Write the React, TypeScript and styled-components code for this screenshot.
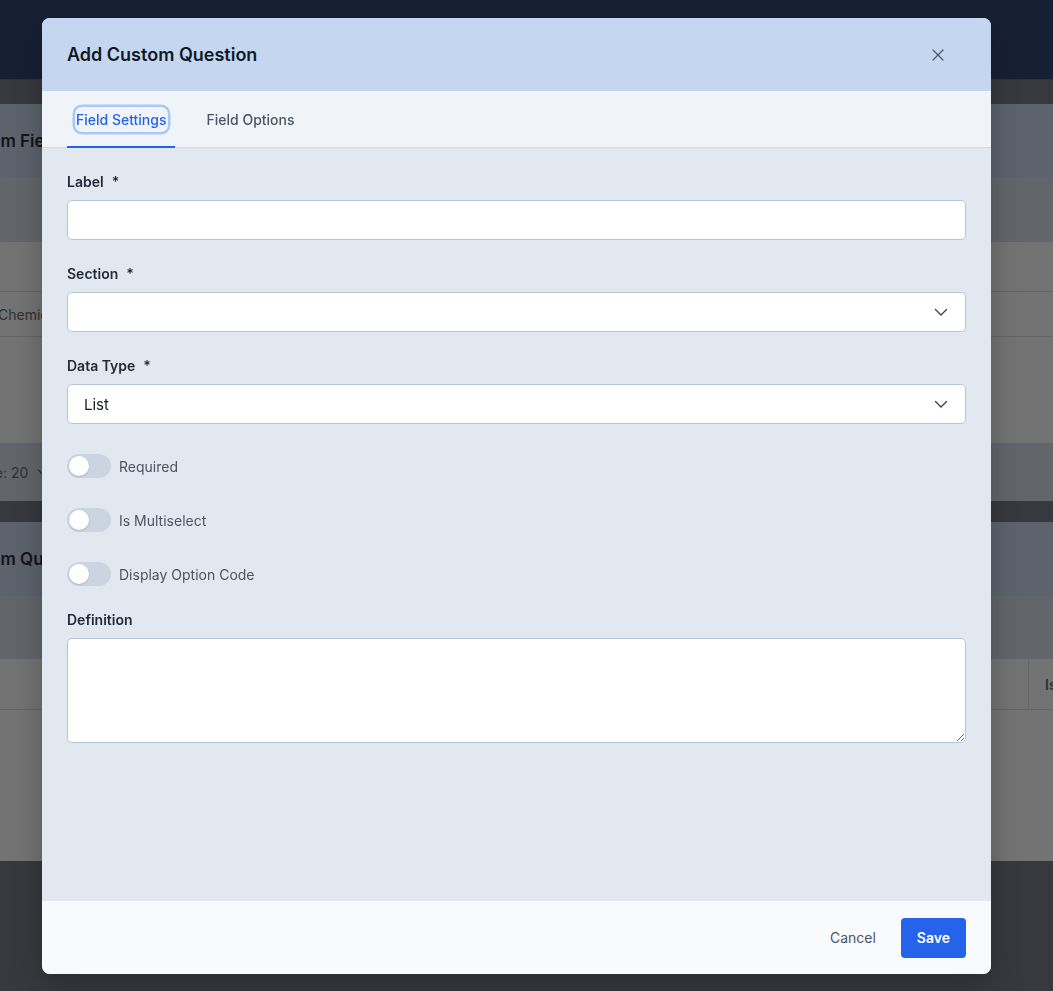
import React from "react";
import styled, { createGlobalStyle } from "styled-components";

const Global = createGlobalStyle`
  html, body { margin: 0; padding: 0; }
  body {
    font-family: Inter, "Noto Sans", "Liberation Sans", sans-serif;
    background: #38393e;
    width: 1053px;
    height: 991px;
    overflow: hidden;
  }
  * { box-sizing: border-box; }
`;

/* ---------- background page (seen through the overlay) ---------- */
const Page = styled.div`
  width: 1053px;
  height: 991px;
  display: flex;
  flex-direction: column;
  background: #38393e;
  overflow: hidden;
`;
const TopBar = styled.div`
  height: 80px;
  background: #172033;
  border-bottom: 1px solid #2b3342;
  flex-shrink: 0;
`;
const Main = styled.div`
  display: flex;
  flex-direction: column;
  gap: 21px;
  padding-top: 24px;
  margin-left: -150px;
  width: 1350px;
  flex-shrink: 0;
`;
const Card = styled.div`
  display: flex;
  flex-direction: column;
  background: #737373;
`;
const CardHeader = styled.div<{ $h: number }>`
  height: ${(p) => p.$h}px;
  background: #5c636d;
  display: flex;
  align-items: center;
  padding-left: 102px;
  font-size: 17px;
  font-weight: 600;
  color: #111418;
`;
const CardToolbar = styled.div<{ $h: number }>`
  height: ${(p) => p.$h}px;
  background: #62666a;
`;
const TableRow = styled.div<{ $h: number; $line?: boolean }>`
  height: ${(p) => p.$h}px;
  display: flex;
  align-items: center;
  border-bottom: ${(p) => (p.$line ? "1px solid #666666" : "none")};
  font-size: 14px;
  color: #2f2f2f;
  padding-left: 148px;
`;
const HeaderCell = styled.div`
  margin-left: auto;
  height: 100%;
  width: 172px;
  border-left: 1px solid #666666;
  display: flex;
  align-items: center;
  padding-left: 16px;
  font-weight: 600;
  color: #2f2f2f;
`;
const CardFooter = styled.div<{ $h: number }>`
  height: ${(p) => p.$h}px;
  background: #62666a;
  display: flex;
  align-items: center;
  padding-left: 54px;
  font-size: 14px;
  color: #2f2f2f;
  gap: 8px;
`;

/* ---------- modal ---------- */
const Overlay = styled.div`
  position: fixed;
  inset: 0;
  display: flex;
  justify-content: flex-start;
  padding: 18px 0 0 42px;
`;
const Modal = styled.div`
  width: 949px;
  height: 956px;
  background: #e2e8f0;
  border-radius: 8px;
  overflow: hidden;
  display: flex;
  flex-direction: column;
  box-shadow: 0 10px 30px rgba(0, 0, 0, 0.25);
`;
const ModalHeader = styled.div`
  height: 73px;
  flex-shrink: 0;
  background: #c5d7f0;
  display: flex;
  align-items: center;
  justify-content: space-between;
  padding: 0 41px 0 25px;
`;
const Title = styled.h2`
  margin: 0;
  font-size: 18px;
  font-weight: 600;
  color: #111827;
`;
const CloseButton = styled.button`
  width: 24px;
  height: 24px;
  border: none;
  background: transparent;
  padding: 0;
  display: flex;
  align-items: center;
  justify-content: center;
  cursor: pointer;
`;
const TabBar = styled.div`
  height: 57px;
  flex-shrink: 0;
  background: #f0f4f9;
  border-bottom: 1px solid #cfd8e3;
  display: flex;
  align-items: stretch;
  gap: 23px;
  padding: 0 25px;
`;
const Tab = styled.div<{ $active?: boolean }>`
  display: flex;
  align-items: center;
  padding: 2px 7px 0 8px;
  font-size: 14px;
  font-weight: 500;
  color: ${(p) => (p.$active ? "#2563eb" : "#4b5563")};
  border-bottom: 2px solid ${(p) => (p.$active ? "#2563eb" : "transparent")};
  margin-bottom: -1px;
`;
const TabText = styled.span<{ $focus?: boolean }>`
  padding: 4px 1px;
  border-radius: 7px;
  box-shadow: ${(p) => (p.$focus ? "0 0 0 2.5px #a9c9f5" : "none")};
`;
const Body = styled.div`
  flex: 1;
  display: flex;
  flex-direction: column;
  gap: 23px;
  padding: 23px 25px 0;
`;
const Field = styled.div`
  display: flex;
  flex-direction: column;
  gap: 9px;
`;
const Label = styled.label`
  font-size: 14px;
  line-height: 20px;
  font-weight: 600;
  color: #1f2937;
  display: flex;
  gap: 8px;
  padding-top: 1px;
  margin-bottom: -1px;
`;
const Input = styled.div`
  height: 40px;
  background: #fff;
  border: 1px solid #b7c5d8;
  border-radius: 5px;
  display: flex;
  align-items: center;
  padding: 0 16px;
  font-size: 15px;
  color: #111827;
`;
const SelectBox = styled(Input)`
  justify-content: space-between;
`;
const TextArea = styled.textarea`
  height: 105px;
  background: #fff;
  border: 1px solid #b7c5d8;
  border-radius: 5px;
  resize: vertical;
  font-family: inherit;
  outline: none;
`;
const ToggleGroup = styled.div`
  display: flex;
  flex-direction: column;
  gap: 30px;
  padding-top: 7px;
`;
const ToggleRow = styled.div`
  display: flex;
  align-items: center;
  gap: 8px;
  height: 24px;
  font-size: 14px;
  color: #4b5563;
`;
const Track = styled.span`
  width: 44px;
  height: 24px;
  border-radius: 12px;
  background: #cbd5e1;
  display: flex;
  align-items: center;
  padding: 2px;
  flex-shrink: 0;
`;
const Knob = styled.span`
  width: 20px;
  height: 20px;
  border-radius: 50%;
  background: #fff;
  box-shadow: 0 1px 2px rgba(0, 0, 0, 0.15);
`;
const Footer = styled.div`
  height: 73px;
  flex-shrink: 0;
  background: #f8fafc;
  display: flex;
  align-items: center;
  justify-content: flex-end;
  gap: 9px;
  padding: 0 25px;
`;
const Button = styled.button<{ $primary?: boolean }>`
  height: 40px;
  padding: 0 16px;
  border: none;
  border-radius: 4px;
  font-family: inherit;
  font-size: 14px;
  font-weight: ${(p) => (p.$primary ? 600 : 400)};
  background: ${(p) => (p.$primary ? "#2563eb" : "transparent")};
  color: ${(p) => (p.$primary ? "#fff" : "#4b5563")};
  cursor: pointer;
`;

const Chevron = ({ size = 16, color = "#374151" }: { size?: number; color?: string }) => (
  <svg width={size} height={size} viewBox="0 0 16 16" fill="none">
    <path d="M2.5 5.5 8 11l5.5-5.5" stroke={color} strokeWidth="1.3" strokeLinecap="round" strokeLinejoin="round" />
  </svg>
);

const CloseIcon = () => (
  <svg width="12" height="12" viewBox="0 0 12 12" fill="none">
    <path d="M1 1l10 10M11 1 1 11" stroke="#4b5563" strokeWidth="1.2" strokeLinecap="round" />
  </svg>
);

const Toggle = ({ label }: { label: string }) => (
  <ToggleRow>
    <Track>
      <Knob />
    </Track>
    <span>{label}</span>
  </ToggleRow>
);

export default function App() {
  return (
    <>
      <Global />
      <Page>
        <TopBar />
        <Main>
          <Card>
            <CardHeader $h={73}>Custom Fields</CardHeader>
            <CardToolbar $h={65} />
            <TableRow $h={50} $line />
            <TableRow $h={45} $line>Chemical</TableRow>
            <TableRow $h={106} />
            <CardFooter $h={58}>
              <span>Rows per page: 20</span>
              <Chevron size={14} color="#2f2f2f" />
            </CardFooter>
          </Card>
          <Card>
            <CardHeader $h={74}>Custom Questions</CardHeader>
            <CardToolbar $h={63} />
            <TableRow $h={51} $line>
              <HeaderCell>Is Active</HeaderCell>
            </TableRow>
            <TableRow $h={151} />
          </Card>
        </Main>
      </Page>
      <Overlay>
        <Modal>
          <ModalHeader>
            <Title>Add Custom Question</Title>
            <CloseButton aria-label="Close">
              <CloseIcon />
            </CloseButton>
          </ModalHeader>
          <TabBar>
            <Tab $active>
              <TabText $focus>Field Settings</TabText>
            </Tab>
            <Tab>
              <TabText>Field Options</TabText>
            </Tab>
          </TabBar>
          <Body>
            <Field>
              <Label>
                Label <span>*</span>
              </Label>
              <Input />
            </Field>
            <Field>
              <Label>
                Section <span>*</span>
              </Label>
              <SelectBox>
                <span />
                <Chevron />
              </SelectBox>
            </Field>
            <Field>
              <Label>
                Data Type <span>*</span>
              </Label>
              <SelectBox>
                <span>List</span>
                <Chevron />
              </SelectBox>
            </Field>
            <ToggleGroup>
              <Toggle label="Required" />
              <Toggle label="Is Multiselect" />
              <Toggle label="Display Option Code" />
            </ToggleGroup>
            <Field>
              <Label>Definition</Label>
              <TextArea />
            </Field>
          </Body>
          <Footer>
            <Button>Cancel</Button>
            <Button $primary>Save</Button>
          </Footer>
        </Modal>
      </Overlay>
    </>
  );
}
